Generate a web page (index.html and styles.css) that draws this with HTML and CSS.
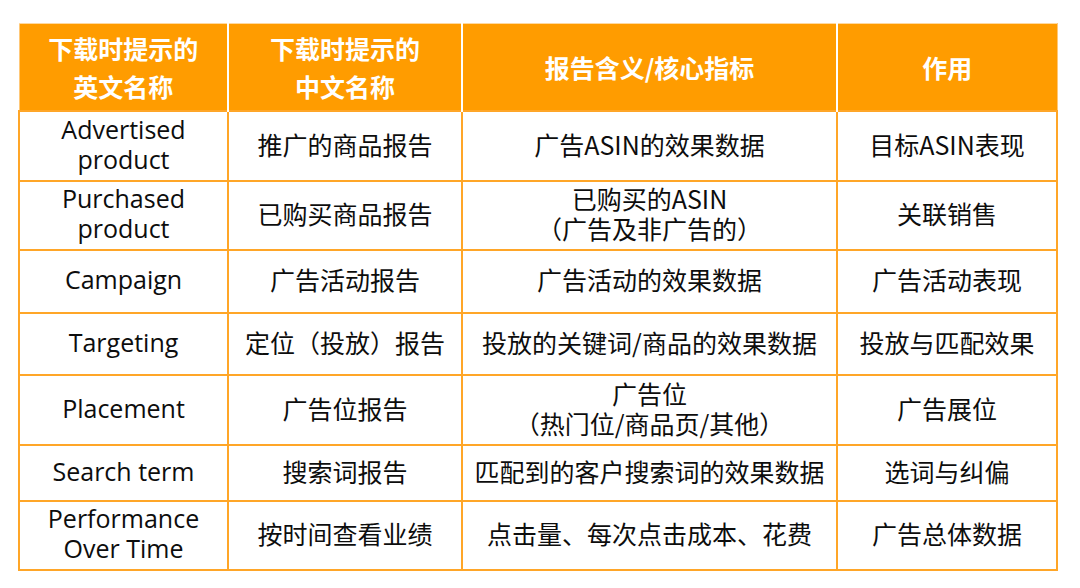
FILE: index.html
```html
<!DOCTYPE html>
<html lang="zh">
<head>
<meta charset="utf-8">
<link rel="stylesheet" href="styles.css">
</head>
<body>
<table class="report">
  <colgroup>
    <col class="c1"><col class="c2"><col class="c3"><col class="c4">
  </colgroup>
  <thead>
    <tr class="r-head">
      <th>下载时提示的<br>英文名称</th>
      <th>下载时提示的<br>中文名称</th>
      <th>报告含义/核心指标</th>
      <th>作用</th>
    </tr>
  </thead>
  <tbody>
    <tr class="r1">
      <td class="en">Advertised<br>product</td>
      <td>推广的商品报告</td>
      <td>广告ASIN的效果数据</td>
      <td>目标ASIN表现</td>
    </tr>
    <tr class="r2">
      <td class="en">Purchased<br>product</td>
      <td>已购买商品报告</td>
      <td>已购买的ASIN<br>（广告及非广告的）</td>
      <td>关联销售</td>
    </tr>
    <tr class="r3">
      <td class="en">Campaign</td>
      <td>广告活动报告</td>
      <td>广告活动的效果数据</td>
      <td>广告活动表现</td>
    </tr>
    <tr class="r4">
      <td class="en">Targeting</td>
      <td>定位（投放）报告</td>
      <td>投放的关键词/商品的效果数据</td>
      <td>投放与匹配效果</td>
    </tr>
    <tr class="r5">
      <td class="en">Placement</td>
      <td>广告位报告</td>
      <td>广告位<br>（热门位/商品页/其他）</td>
      <td>广告展位</td>
    </tr>
    <tr class="r6">
      <td class="en">Search term</td>
      <td>搜索词报告</td>
      <td>匹配到的客户搜索词的效果数据</td>
      <td>选词与纠偏</td>
    </tr>
    <tr class="r7">
      <td class="en">Performance<br>Over Time</td>
      <td>按时间查看业绩</td>
      <td>点击量、每次点击成本、花费</td>
      <td>广告总体数据</td>
    </tr>
  </tbody>
</table>
</body>
</html>
```

FILE: styles.css
```css
html, body {
  margin: 0;
  padding: 0;
  background: #ffffff;
}

body {
  padding: 23px 0 0 18px;
  font-family: "Noto Sans CJK SC", "Noto Sans", sans-serif;
  color: #111111;
}

.report {
  border-collapse: collapse;
  table-layout: fixed;
  width: 1038px;
}

.c1 { width: 209px; }
.c2 { width: 234px; }
.c3 { width: 375px; }
.c4 { width: 220px; }

.report th,
.report td {
  padding: 0;
  text-align: center;
  vertical-align: middle;
  font-size: 25px;
}

.report th {
  background: #ff9c00;
  color: #ffffff;
  font-weight: 700;
  line-height: 38px;
  border: 1px solid #ffd9a0;
  border-left: 2px solid #ffffff;
  border-right: 2px solid #ffffff;
}

.report th:first-child { border-left: 1px solid #ffc878; }
.report th:last-child { border-right: 1px solid #ffc878; }

.report td {
  border: 2px solid #ffa628;
  padding-bottom: 4px;
  line-height: 30px;
  font-weight: 400;
  color: #0d0d0d;
}

.report td.en {
  font-family: "Open Sans", "Noto Sans", sans-serif;
  font-size: 25px;
  line-height: 30px;
}

.r-head { height: 87px; }
.r1 { height: 70px; }
.r2 { height: 69px; }
.r3 { height: 63px; }
.r4 { height: 62px; }
.r5 { height: 70px; }
.r6 { height: 56px; }
.r7 { height: 69px; }
```
